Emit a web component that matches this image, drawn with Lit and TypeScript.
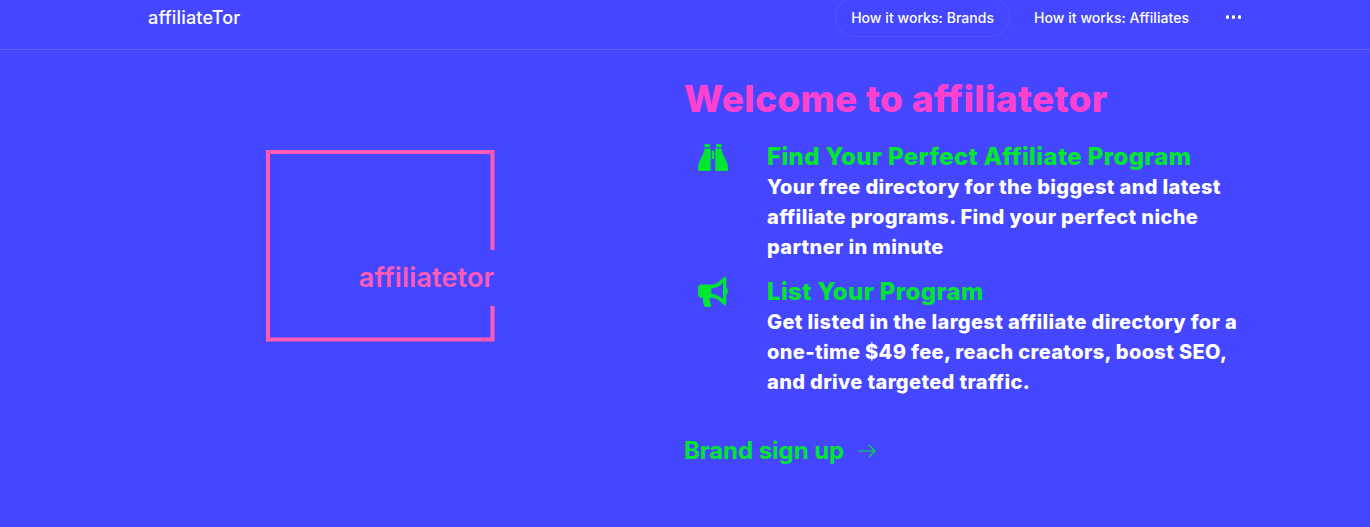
import { LitElement, html, css } from "lit";
import { customElement } from "lit/decorators.js";

@customElement("app-root")
export class AppRoot extends LitElement {
  static styles = css`
    :host { display: block; height: 527px; overflow: hidden; background: #4447ff; font-family: Inter, sans-serif; color: #fff; }
    .header { height: 49px; border-bottom: 1px solid #5a5dff; display: flex; align-items: flex-start; justify-content: space-between; padding: 0 128px 0 148px; }
    .brand { font-size: 18px; font-weight: 500; line-height: 36px; letter-spacing: 0.18px; }
    .nav { display: flex; align-items: center; margin-top: -3px; font-size: 14px; font-weight: 500; letter-spacing: 0.05px; }
    .nav a { height: 40px; box-sizing: border-box; padding: 0 16px; line-height: 40px; border-radius: 20px; border: 1px solid transparent; margin-right: 8px; }
    .nav a.active { border-color: #5558ff; padding: 0 15px; margin-right: 7px; }
    .dots { display: flex; gap: 2.7px; margin-left: 12px; width: 16px; }
    .dots i { flex: none; width: 3.3px; height: 3.3px; border-radius: 50%; background: #fff; }
    .main { display: grid; grid-template-columns: 536px 1fr; padding-left: 148px; }
    .logo { display: flex; justify-content: center; padding: 100px 71px 0 0; }
    .logo svg { display: block; }
    .logo text { font-family: Inter, sans-serif; font-weight: 600; font-size: 27px; letter-spacing: 0.15px; fill: #ff5ab4; }
    .content { padding-top: 26px; }
    h1 { margin: 0 0 20px; font-size: 37px; line-height: 46px; font-weight: 800; color: #ff41d0; letter-spacing: 0.3px; }
    .item { display: flex; margin-bottom: 15px; }
    .icon { width: 83px; flex: none; padding-left: 14px; box-sizing: border-box; }
    .icon.binoculars { padding-top: 2px; }
    .icon svg { display: block; fill: #00e632; }
    h3 { margin: 0; font-size: 24px; line-height: 30px; font-weight: 800; color: #00e632; letter-spacing: 0.37px; }
    p { margin: 0; font-size: 20px; line-height: 30px; font-weight: 800; width: 480px; letter-spacing: 0.36px; }
    .cta { display: flex; align-items: center; margin-top: 38px; color: #00e632; font-size: 24px; font-weight: 700; line-height: 32px; gap: 14px; letter-spacing: -0.05px; }
    .cta svg { display: block; }
  `;

  render() {
    return html`
      <div class="header">
        <div class="brand">affiliateTor</div>
        <div class="nav">
          <a class="active">How it works: Brands</a>
          <a>How it works: Affiliates</a>
          <div class="dots"><i></i><i></i><i></i></div>
        </div>
      </div>
      <div class="main">
        <div class="logo">
          <svg width="229" height="193" viewBox="0 0 229 193" fill="none">
            <path d="M226.5 100V2H2V189.5H226.5V156" stroke="#ff5ab4" stroke-width="4"></path>
            <text x="228.5" y="137" text-anchor="end">affiliatetor</text>
          </svg>
        </div>
        <div class="content">
          <h1>Welcome to affiliatetor</h1>
          <div class="item">
            <div class="icon binoculars">
              <svg width="30" height="28" viewBox="0 0 30 28"><path d="M6.4 0.7C6.4.3 6.7 0 7.1 0H11.3C11.7 0 12 .3 12 .7V3.3H6.4zM18 .7C18 .3 18.3 0 18.7 0H22.9C23.3 0 23.6 .3 23.6 .7V3.3H18zM6.6 4.6H12.7V26C12.7 26.6 12.2 27 11.7 27H1.2C.5 27 0 26.5 0 25.8V23.5C.3 16 5.6 12.5 6.6 4.6zM23.4 4.6H17.3V26C17.3 26.6 17.8 27 18.3 27H28.8C29.5 27 30 26.5 30 25.8V23.5C29.7 16 24.4 12.5 23.4 4.6zM13.7 6.7H16.3V15H13.7z"></path></svg>
            </div>
            <div>
              <h3>Find Your Perfect Affiliate Program</h3>
              <p>Your free directory for the biggest and latest<br>affiliate programs. Find your perfect niche<br>partner in minute</p>
            </div>
          </div>
          <div class="item">
            <div class="icon">
              <svg width="30" height="30" viewBox="0 0 576 512" preserveAspectRatio="none"><path d="M576 240c0-23.63-12.95-44.04-32-55.12V32.01C544 23.26 537.02 0 512 0c-7.12 0-14.19 2.38-19.98 7.02l-85.03 68.03C364.28 109.19 310.66 128 256 128H64c-35.35 0-64 28.65-64 64v96c0 35.35 28.65 64 64 64h33.7c-1.39 10.48-2.18 21.14-2.18 32 0 39.77 9.26 77.35 25.56 110.94 5.19 10.69 16.52 17.06 28.4 17.06h74.28c26.05 0 41.69-29.84 25.9-50.56-16.4-21.52-26.15-48.36-26.15-77.44 0-11.11 1.62-21.79 4.41-32H256c54.66 0 108.28 18.81 150.98 52.95l85.03 68.03a32.023 32.023 0 0 0 19.98 7.02c24.92 0 32-22.78 32-32V295.13C563.05 284.04 576 263.63 576 240zm-96 141.42l-33.05-26.44C392.95 311.78 325.12 288 256 288v-96c69.12 0 136.95-23.78 190.95-66.98L480 98.58v282.84z"></path></svg>
            </div>
            <div>
              <h3>List Your Program</h3>
              <p>Get listed in the largest affiliate directory for a<br>one-time $49 fee, reach creators, boost SEO,<br>and drive targeted traffic.</p>
            </div>
          </div>
          <div class="cta">
            <span>Brand sign up</span>
            <svg width="18" height="14" viewBox="0 0 18 14" fill="none" stroke="#00e632" stroke-width="1.2"><path d="M0.5 7H17M11 1l6 6-6 6"></path></svg>
          </div>
        </div>
      </div>
    `;
  }
}
